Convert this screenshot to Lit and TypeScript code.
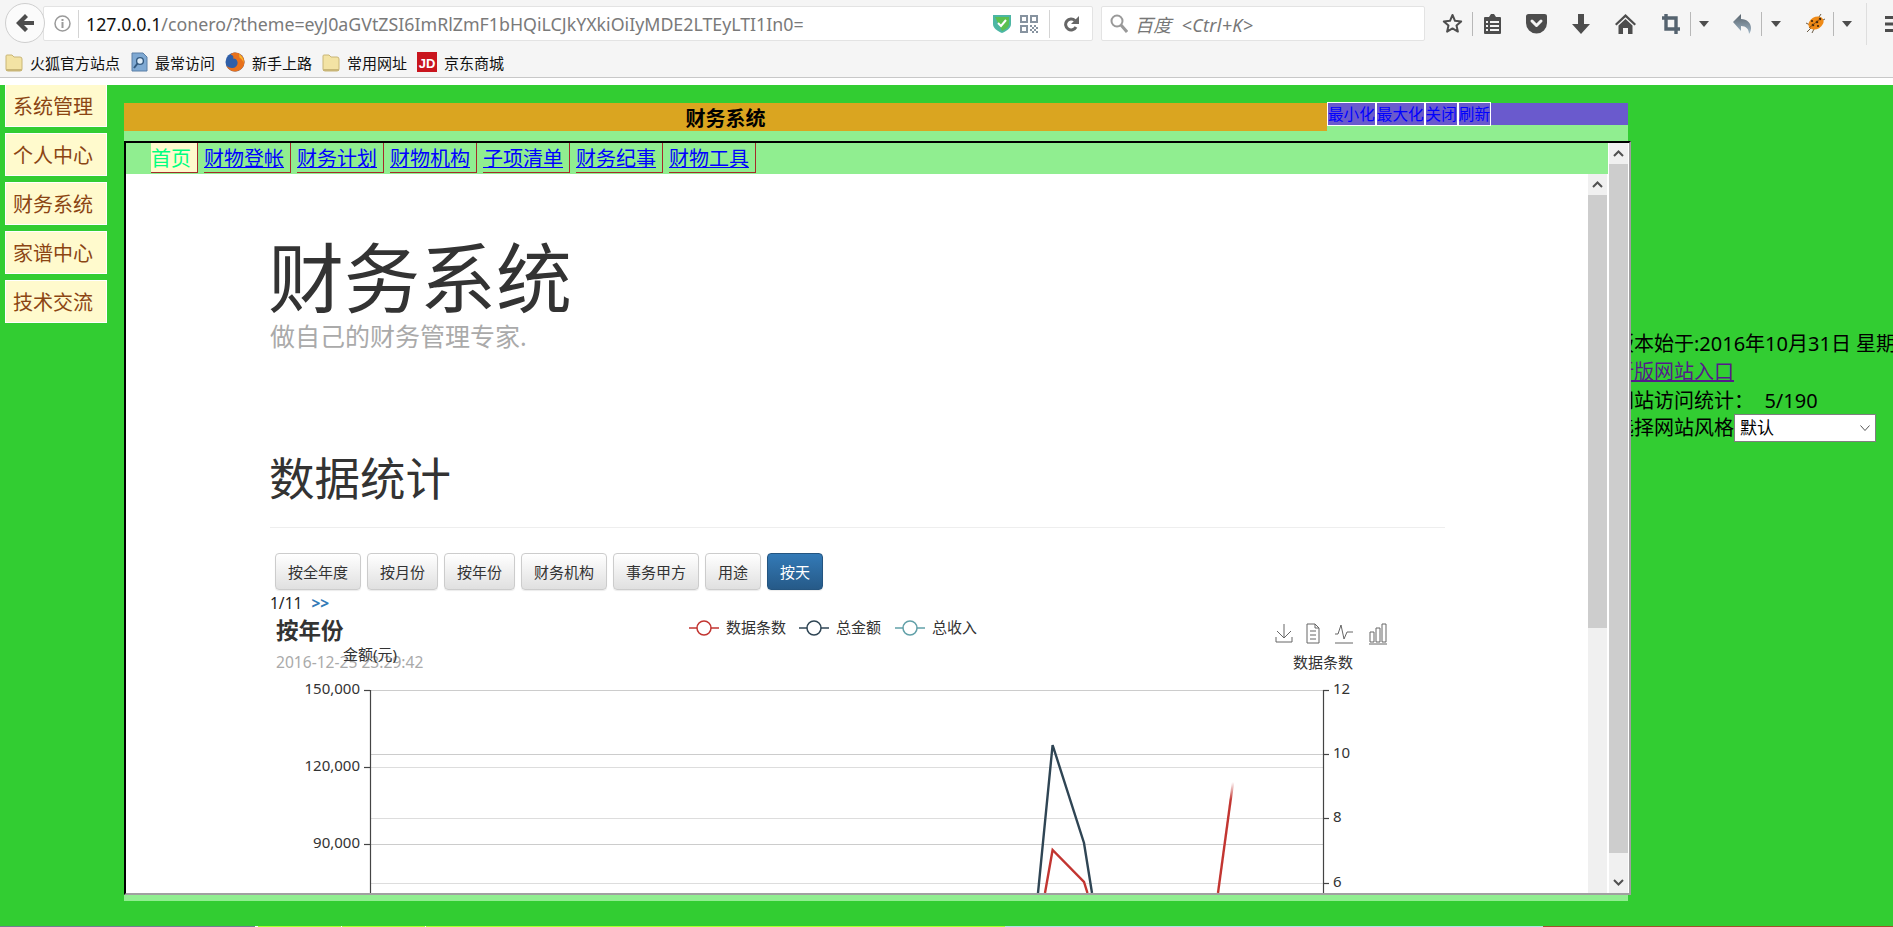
import { LitElement, html, css } from 'lit';
import { customElement } from 'lit/decorators.js';

const sideItems = ['系统管理', '个人中心', '财务系统', '家谱中心', '技术交流'];
const tabs = ['财物登帐', '财务计划', '财物机构', '子项清单', '财务纪事', '财物工具'];
const chartButtons = ['按全年度', '按月份', '按年份', '财务机构', '事务甲方', '用途'];

const folderIcon = html`<svg width="18" height="20" viewBox="0 0 18 20">
  <path d="M2 3h5l2 2h6a2 2 0 0 1 2 2v10a2 2 0 0 1-2 2H3a2 2 0 0 1-2-2V4a1 1 0 0 1 1-1z" fill="#f3e3a4" stroke="#c9b677" />
  <rect x="1" y="17" width="16" height="2" fill="#c9b677" />
</svg>`;

const bookmarks = [
  {
    label: '火狐官方站点',
    icon: folderIcon,
  },
  {
    label: '最常访问',
    icon: html`<svg width="18" height="20" viewBox="0 0 18 20">
      <path d="M2 1h11l4 4v14H2z" fill="#7fa9d3" stroke="#5b7fa6" />
      <circle cx="10" cy="9" r="3.4" fill="#dcebf7" stroke="#33597f" stroke-width="1.4" />
      <path d="M7.5 11.5L4 16" stroke="#33597f" stroke-width="2" />
    </svg>`,
  },
  {
    label: '新手上路',
    icon: html`<svg width="20" height="20" viewBox="0 0 20 20">
      <circle cx="10" cy="10" r="9.5" fill="#2f5fa8" />
      <path d="M10 .5a9.5 9.5 0 1 1-9 12.5c1.500 2 4.500 3.500 7 3 3-.5 5-3 4.500-6C12 7 9.500 6 8 6.500 9 4.500 8 3 5.500 2.500 7 1 8.500 .5 10 .5z" fill="#e8711c" />
      <path d="M14 2c3 2 5 5 4.500 9-.5-2.500-2-4.500-4-5.500z" fill="#f7b52c" />
    </svg>`,
  },
  {
    label: '常用网址',
    icon: folderIcon,
  },
  {
    label: '京东商城',
    icon: html`<svg width="20" height="20" viewBox="0 0 20 20">
      <rect width="20" height="20" fill="#c9151e" />
      <text x="10" y="15.500" text-anchor="middle" class="jd">JD</text>
    </svg>`,
  },
];

const dropdown = html`<svg width="10" height="6" viewBox="0 0 10 6"><path d="M0 0h10L5 6z" fill="#4d4d4d" /></svg>`;
const sep = html`<svg width="1" height="24" viewBox="0 0 1 24"><rect width="1" height="24" fill="#b8b8b8" /></svg>`;

// gap is the space before the item, counted from the end of the previous one
const tools = [
  {
    gap: 17,
    width: 21,
    icon: html`<svg width="21" height="21" viewBox="0 0 21 21"><path d="M10.500 2l2.500 5.800 6.200.6-4.700 4.100 1.400 6.100-5.400-3.200-5.400 3.200 1.400-6.100L1.800 8.400 8 7.800z" fill="none" stroke="#4d4d4d" stroke-width="2" stroke-linejoin="round" /></svg>`,
  },
  { gap: 9, width: 1, icon: sep },
  {
    gap: 10,
    width: 19,
    icon: html`<svg width="19" height="22" viewBox="0 0 19 22">
      <path d="M2 4h4l2-3h3l2 3h4a1 1 0 0 1 1 1v15a1 1 0 0 1-1 1H2a1 1 0 0 1-1-1V5a1 1 0 0 1 1-1z" fill="#4d4d4d" />
      <path d="M3 8h2v2H3zm4 0h9v2H7zm-4 4h2v2H3zm4 0h9v2H7zm-4 4h2v2H3zm4 0h9v2H7z" fill="#f5f5f5" />
    </svg>`,
  },
  {
    gap: 24,
    width: 21,
    icon: html`<svg width="21" height="20" viewBox="0 0 21 20">
      <path d="M2.500 0h16A2.500 2.500 0 0 1 21 2.500V9a10.500 10.500 0 0 1-21 0V2.500A2.500 2.500 0 0 1 2.500 0z" fill="#4d4d4d" />
      <path d="M6 7l4.500 4.500L15 7" fill="none" stroke="#f5f5f5" stroke-width="3" stroke-linecap="round" stroke-linejoin="round" />
    </svg>`,
  },
  {
    gap: 25,
    width: 18,
    icon: html`<svg width="18" height="20" viewBox="0 0 18 20"><path d="M6 0h6v10h6l-9 10-9-10h6z" fill="#4d4d4d" /></svg>`,
  },
  {
    gap: 25,
    width: 21,
    icon: html`<svg width="21" height="20" viewBox="0 0 21 20">
      <path d="M10.500 0L21 10l-1.500 1.500-9-8.300-9 8.300L0 10z" fill="#4d4d4d" />
      <path d="M10.500 5l7 6.500V20H13v-6H8v6H3.500v-8.500z" fill="#4d4d4d" />
    </svg>`,
  },
  {
    gap: 26,
    width: 18,
    icon: html`<svg width="18" height="20" viewBox="0 0 18 20">
      <path d="M4 0v15h14M0 4h14v16" fill="none" stroke="#55636f" stroke-width="3.400" />
    </svg>`,
  },
  { gap: 10, width: 1, icon: sep },
  { gap: 8, width: 10, icon: dropdown },
  {
    gap: 24,
    width: 18,
    icon: html`<svg width="18" height="20" viewBox="0 0 18 20">
      <defs>
        <linearGradient id="undo" x1="0" y1="0" x2="0" y2="1">
          <stop offset="0" stop-color="#59636c" />
          <stop offset="1" stop-color="#9fb6c7" />
        </linearGradient>
      </defs>
      <path d="M8 0v5c6 0 10 4 10 9 0 2-.5 4-2 6 0-5-3-8-8-8v5L0 8z" fill="url(#undo)" />
    </svg>`,
  },
  { gap: 10, width: 1, icon: sep },
  { gap: 9, width: 10, icon: dropdown },
  {
    gap: 24,
    width: 20,
    icon: html`<svg width="20" height="20" viewBox="0 0 20 20">
      <path d="M2 18l4-4M1 9l4 2M7 19l2-4M14 3l2-3M18 6l2-1" stroke="#6b5b45" stroke-width="1" />
      <ellipse cx="11" cy="9" rx="8" ry="6" transform="rotate(-30 11 9)" fill="#ef8a17" />
      <circle cx="8" cy="11" r="1.300" fill="#40260c" />
      <circle cx="12" cy="8" r="1.300" fill="#40260c" />
      <circle cx="15" cy="5" r="1.200" fill="#40260c" />
      <circle cx="7" cy="7" r="1.100" fill="#40260c" />
      <circle cx="13" cy="12" r="1.100" fill="#40260c" />
      <path d="M4 14L15 5" stroke="#7b4a14" stroke-width=".8" />
    </svg>`,
  },
  { gap: 8, width: 1, icon: sep },
  { gap: 8, width: 10, icon: dropdown },
  {
    gap: 14,
    width: 1,
    icon: html`<svg width="1" height="42" viewBox="0 0 1 42"><rect width="1" height="42" fill="#dedede" /></svg>`,
  },
  {
    gap: 16,
    width: 12,
    icon: html`<svg width="12" height="18" viewBox="0 0 12 18"><path d="M2 1h10v3H2zm0 6.500h10v3H2zm0 6.500h10v3H2z" fill="#4d4d4d" /></svg>`,
  },
];

const legend = [
  { x: 689, label: '数据条数', color: '#c23531' },
  { x: 799, label: '总金额', color: '#2f4554' },
  { x: 895, label: '总收入', color: '#61a0a8' },
];

const leftTicks = [
  { y: 690, label: '150,000' },
  { y: 767, label: '120,000' },
  { y: 844, label: '90,000' },
  { y: 921, label: '60,000' },
];

const rightTicks = [
  { y: 690, label: '12' },
  { y: 754, label: '10' },
  { y: 818, label: '8' },
  { y: 883, label: '6' },
];

@customElement('app-root')
export class AppRoot extends LitElement {
  static styles = css`
    :host {
      display: flex;
      flex-direction: column;
      height: 927px;
      overflow: hidden;
      font-family: 'Noto Sans', 'Noto Sans CJK SC', sans-serif;
      background: #fff;
    }

    /* browser chrome */
    .toolbar {
      flex: none;
      display: flex;
      align-items: flex-start;
      height: 41px;
      padding-top: 6px;
      background: #f5f5f5;
    }
    .back {
      flex: none;
      position: relative;
      z-index: 1;
      display: flex;
      align-items: center;
      justify-content: center;
      box-sizing: border-box;
      width: 40px;
      height: 40px;
      margin: -3px 0 0 5px;
      border: 1px solid #cfcfcf;
      border-radius: 50%;
      background: #fbfbfb;
    }
    .address,
    .search {
      flex: none;
      display: flex;
      align-items: center;
      box-sizing: border-box;
      height: 35px;
      border: 1px solid #e3e3e3;
      border-radius: 2px;
      background: #fff;
    }
    .address {
      width: 1050px;
      margin-left: -2px;
      padding: 0 13px 0 10px;
    }
    .url-sep {
      flex: none;
      width: 1px;
      height: 28px;
      margin-left: 7px;
      background: #d4d4d4;
    }
    .url {
      flex: 1;
      margin-left: 7px;
      font-size: 17.800px;
      color: #7a7a7a;
      white-space: nowrap;
    }
    .url b {
      font-weight: 400;
      color: #111;
    }
    .qr {
      margin-left: 9px;
    }
    .bar-sep {
      width: 1px;
      height: 28px;
      margin: 0 14px 0 11px;
      background: #d4d4d4;
    }
    .search {
      width: 324px;
      margin-left: 8px;
      padding-left: 8px;
      font-size: 18px;
      font-style: italic;
      color: #777;
    }
    .search span {
      margin-left: 7px;
      letter-spacing: 0.3px;
    }
    .tools {
      display: flex;
      align-items: center;
      height: 35px;
    }
    .tool {
      flex: none;
      display: flex;
      justify-content: center;
    }
    .bookmarks {
      flex: none;
      display: flex;
      align-items: center;
      gap: 10px;
      box-sizing: border-box;
      height: 31px;
      padding: 0 0 0 5px;
      border-bottom: 1px solid #c8c8c8;
      background: #f5f5f5;
      font-size: 15px;
      color: #111;
    }
    .bookmark {
      display: flex;
      align-items: center;
      gap: 7px;
    }
    .jd {
      font: 700 13px 'Liberation Sans', sans-serif;
      fill: #fff;
    }
    .gap-white {
      flex: none;
      height: 7px;
      background: #fff;
    }

    /* page */
    .page {
      flex: none;
      display: flex;
      height: 841px;
      overflow: hidden;
      background: #32cd32;
    }
    .side {
      flex: none;
      display: flex;
      flex-direction: column;
      gap: 6px;
      box-sizing: border-box;
      width: 124px;
      margin-top: -1px;
      padding-left: 5px;
    }
    .side a {
      box-sizing: border-box;
      width: 102px;
      height: 43px;
      padding-left: 7px;
      border: 1px solid #fff;
      background: #fffacd;
      color: #8b4513;
      font-size: 20px;
      line-height: 43px;
    }
    .window {
      flex: none;
      position: relative;
      z-index: 1;
      width: 1504px;
      margin-top: 18px;
      height: 798px;
      background: #90ee90;
    }
    .head {
      display: flex;
      align-items: flex-start;
      height: 38px;
    }
    .title {
      width: 1203px;
      height: 28px;
      background: #daa520;
      text-align: center;
      font-size: 20px;
      font-weight: 700;
      line-height: 31px;
      color: #000;
    }
    .win-buttons {
      flex: 1;
      display: flex;
      height: 22px;
      background: #6a5acd;
    }
    .win-buttons a {
      box-sizing: border-box;
      height: 24px;
      margin-top: -1px;
      border: 1px solid #fff;
      color: #00f;
      font-size: 15.600px;
      line-height: 22px;
    }
    .frame {
      display: flex;
      box-sizing: border-box;
      width: 1507px;
      height: 754px;
      border: 2px solid;
      border-color: #000 #a0a0a0 #a0a0a0 #000;
      background: #fff;
    }
    .main {
      flex: 1;
      min-width: 0;
      display: flex;
      flex-direction: column;
    }
    .nav {
      flex: none;
      display: flex;
      gap: 6px;
      height: 31px;
      padding-left: 25px;
      margin-right: 1px;
      background: #90ee90;
    }
    .nav a {
      height: 29px;
      padding-right: 6px;
      border-right: 1px solid #a52a2a;
      border-bottom: 1px solid #a52a2a;
      color: #00f;
      font-size: 20px;
      line-height: 31px;
      text-decoration: underline;
      text-decoration-thickness: 1px;
      text-underline-offset: 1px;
    }
    .nav a.current {
      background: #fffacd;
      color: #00ff7f;
      text-decoration: none;
    }
    .inner {
      flex: 1;
      min-height: 0;
      display: flex;
    }
    .content {
      flex: 1;
      min-width: 0;
      overflow: hidden;
      padding: 66px 0 0 144px;
    }
    .bar {
      flex: none;
      display: flex;
      flex-direction: column;
      width: 19px;
      background: #f0f0f0;
    }
    .bar.inner-bar {
      margin-right: 2px;
    }
    .bar .arrow {
      flex: none;
      display: flex;
      align-items: center;
      justify-content: center;
      height: 21px;
    }
    .bar .thumb {
      flex: none;
      background: #cdcdcd;
    }
    .inner-bar .thumb {
      height: 433px;
    }
    .outer-bar .thumb {
      flex: 1;
    }
    .outer-bar .rest {
      flex: none;
      height: 19px;
    }
    .outer-bar {
      margin-left: 0;
      border-right: 1px solid #fff;
    }
    h1,
    h2,
    p {
      margin: 0;
      font-weight: 400;
    }
    h1 {
      margin-left: -2px;
      font-size: 76px;
      line-height: 75px;
      color: #333;
    }
    .sub {
      margin-top: 8px;
      font-size: 25px;
      line-height: 27px;
      color: #aaa;
    }
    h2 {
      margin: 105px 0 0 -1px;
      font-size: 45.500px;
      line-height: 47px;
      color: #333;
    }
    .rule {
      width: 1175px;
      margin-top: 25px;
      border-top: 1px solid #eee;
    }
    .buttons {
      display: flex;
      gap: 6px;
      margin: 25px 0 0 5px;
    }
    .buttons button {
      box-sizing: border-box;
      height: 37px;
      padding: 0 12px;
      border: 1px solid #ccc;
      border-radius: 4px;
      background: linear-gradient(#fff, #e0e0e0);
      box-shadow: 0 1px 1px rgba(0, 0, 0, 0.08);
      color: #333;
      font-family: inherit;
      font-size: 15px;
    }
    .buttons button.on {
      border-color: #245580;
      background: linear-gradient(#337ab7, #265a88);
      color: #fff;
    }
    .pager {
      box-sizing: border-box;
      height: 22px;
      padding-top: 2px;
      font-size: 15.500px;
      line-height: 22px;
      color: #222;
    }
    .pager a {
      margin-left: 5px;
      color: #337ab7;
      font-weight: 700;
    }
    .chart {
      display: block;
    }
    .chart text {
      font-family: 'Noto Sans', 'Noto Sans CJK SC', sans-serif;
      font-size: 15px;
      fill: #333;
    }
    .chart text.chart-title {
      font-size: 22.500px;
      font-weight: 700;
    }
    .chart text.chart-sub {
      font-size: 15.600px;
      fill: #aaa;
    }

    /* right column sits partly under the window */
    .info {
      flex: 1;
      min-width: 0;
      overflow: hidden;
      margin-left: -14px;
      padding-top: 245px;
      color: #000;
      font-size: 20px;
      line-height: 28.600px;
      white-space: nowrap;
    }
    .info a {
      display: block;
      margin-top: -1px;
      color: #551a8b;
      text-decoration: underline;
    }
    .count {
      margin-top: 1px;
    }
    .style-row {
      display: flex;
      align-items: center;
      margin-top: -2px;
    }
    .select {
      display: flex;
      align-items: center;
      justify-content: space-between;
      box-sizing: border-box;
      width: 142px;
      height: 28px;
      padding: 0 5px;
      border: 1px solid #7f7f7f;
      background: #fff;
      font-size: 17px;
    }
    .strip {
      flex: none;
      display: flex;
      height: 1px;
    }
    .strip i {
      display: block;
    }
    .s1 {
      width: 255px;
      background: #708090;
    }
    .s2 {
      width: 3px;
      background: #fff;
    }
    .s3 {
      width: 83px;
      background: #adff2f;
    }
    .s4 {
      width: 1px;
      background: #fff;
    }
    .s5 {
      width: 579px;
      background: #adff2f;
    }
    .s6 {
      width: 538px;
      background: #b0e0e6;
    }
    .s7 {
      flex: 1;
      background: #a0522d;
    }
  `;

  private renderTopBar() {
    return html`
      <div class="toolbar">
        <div class="back">
          <svg width="18" height="18" viewBox="0 0 18 18">
            <path d="M9 0L0 9l9 9 3-3-4-4h10V7H8l4-4z" fill="#4d4d4d" />
          </svg>
        </div>
        <div class="address">
          <svg width="17" height="17" viewBox="0 0 17 17">
            <circle cx="8.500" cy="8.500" r="7.500" fill="none" stroke="#9a9a9a" stroke-width="1.500" />
            <rect x="7.500" y="7" width="2" height="6" fill="#9a9a9a" />
            <rect x="7.500" y="4" width="2" height="2" fill="#9a9a9a" />
          </svg>
          <div class="url-sep"></div>
          <div class="url"><b>127.0.0.1</b>/conero/?theme=eyJ0aGVtZSI6ImRlZmF1bHQiLCJkYXkiOiIyMDE2LTEyLTI1In0=</div>
          <svg width="18" height="19" viewBox="0 0 18 19">
            <path d="M0 1h18v9c0 4-4 7-9 9-5-2-9-5-9-9z" fill="#4cb6a4" />
            <path d="M2 3h14v7c0 3-3 5-7 7z" fill="#5bc04f" />
            <path d="M5 9l3 3 5-6" fill="none" stroke="#fff" stroke-width="2" />
          </svg>
          <svg class="qr" width="18" height="18" viewBox="0 0 18 18" fill="#8793a0">
            <path d="M0 0h8v8H0zm2 2v4h4V2zM10 0h8v8h-8zm2 2v4h4V2zM0 10h8v8H0zm2 2v4h4v-4z" fill-rule="evenodd" />
            <path d="M10 10h2v2h-2zm4 0h2v2h-2zm-2 2h2v2h-2zm4 0h2v2h-2zm-6 2h2v2h-2zm4 0h2v2h-2zm-2 2h2v2h-2zm4 0h2v2h-2z" />
          </svg>
          <div class="bar-sep"></div>
          <svg width="15" height="16" viewBox="0 0 15 16">
            <path d="M12 11a5.500 5.500 0 1 1-1-6.500" fill="none" stroke="#666" stroke-width="3" />
            <path d="M15 0v8H7z" fill="#666" />
          </svg>
        </div>
        <div class="search">
          <svg width="18" height="19" viewBox="0 0 18 19">
            <circle cx="7" cy="7" r="5.500" fill="none" stroke="#999" stroke-width="2" />
            <path d="M11 11l6 7" stroke="#999" stroke-width="3" />
          </svg>
          <span>百度&nbsp;&nbsp;&lt;Ctrl+K&gt;</span>
        </div>
        <div class="tools">
          ${tools.map(
            (t) => html`<div class="tool" style="margin-left:${t.gap}px;width:${t.width}px">${t.icon}</div>`,
          )}
        </div>
      </div>
      <div class="bookmarks">
        ${bookmarks.map((b) => html`<div class="bookmark">${b.icon}<span>${b.label}</span></div>`)}
      </div>
      <div class="gap-white"></div>
    `;
  }

  private renderChart() {
    const gridLines = [
      { y: 690, c: '#ccc' },
      { y: 754, c: '#ccc' },
      { y: 767, c: '#ddd' },
      { y: 818, c: '#ddd' },
      { y: 844, c: '#ccc' },
      { y: 883, c: '#ddd' },
    ];
    return html`
      <svg class="chart" width="1175" height="290" viewBox="270 612 1175 290">
        <defs>
          <linearGradient id="fade" gradientUnits="userSpaceOnUse" x1="0" y1="782" x2="0" y2="800">
            <stop offset="0" stop-color="#c23531" stop-opacity="0" />
            <stop offset="1" stop-color="#c23531" />
          </linearGradient>
        </defs>
        <text class="chart-title" x="276" y="639">按年份</text>
        <text class="chart-sub" x="276" y="668">2016-12-25 23:29:42</text>
        <text x="370" y="660" text-anchor="middle">金额(元)</text>
        <text x="1323" y="668" text-anchor="middle">数据条数</text>

        ${legend.map(
          (l) => html`<svg x="0" y="0" overflow="visible">
            <line x1=${l.x} x2=${l.x + 30} y1="628" y2="628" stroke=${l.color} stroke-width="1.500" />
            <circle cx=${l.x + 15} cy="628" r="7" fill="#fff" stroke=${l.color} stroke-width="1.500" />
            <text x=${l.x + 37} y="633">${l.label}</text>
          </svg>`,
        )}

        <g fill="none" stroke="#666" stroke-width="1">
          <path d="M1284 624v14M1277 631l7 7 7-7M1276 637v5h16v-5" />
          <path d="M1307 624h8l4 4v15h-12zM1315 624v4h4M1310 631h6M1310 635h6M1310 639h6" />
          <path d="M1335 634h3l3-9 3 14 3-7h6M1335 643h18" />
          <path d="M1370 632h4v10h-4zM1376 628h4v14h-4zM1382 624h4v18h-4zM1369 644h18" />
        </g>

        ${gridLines.map((g) => html`<svg overflow="visible"><line x1="370" x2="1323" y1=${g.y + 0.5} y2=${g.y + 0.5} stroke=${g.c} stroke-width="1.200" /></svg>`)}

        <polyline points="1038,893 1052.600,745 1084,843 1092,893" fill="none" stroke="#2f4554" stroke-width="2.400" />
        <polyline points="1045,893 1052.600,850 1084,882 1087.500,893" fill="none" stroke="#c23531" stroke-width="2.400" />
        <line x1="1218" y1="893" x2="1233.600" y2="778" stroke="url(#fade)" stroke-width="2.400" />

        <line x1="370.500" x2="370.500" y1="690" y2="930" stroke="#444" stroke-width="1.200" />
        <line x1="1323.500" x2="1323.500" y1="690" y2="930" stroke="#444" stroke-width="1.200" />
        ${leftTicks.map(
          (t) => html`<svg overflow="visible">
            <line x1="364" x2="370" y1=${t.y + 0.5} y2=${t.y + 0.5} stroke="#444" stroke-width="1.200" />
            <text x="360" y=${t.y + 4} text-anchor="end">${t.label}</text>
          </svg>`,
        )}
        ${rightTicks.map(
          (t) => html`<svg overflow="visible">
            <line x1="1323" x2="1329" y1=${t.y + 0.5} y2=${t.y + 0.5} stroke="#444" stroke-width="1.200" />
            <text x="1333" y=${t.y + 4}>${t.label}</text>
          </svg>`,
        )}
      </svg>
    `;
  }

  private arrow(up: boolean) {
    return html`<div class="arrow">
      <svg width="11" height="7" viewBox="0 0 11 7">
        <path d=${up ? 'M1 6l4.500-4.500L10 6' : 'M1 1l4.500 4.500L10 1'} fill="none" stroke="#505050" stroke-width="2" />
      </svg>
    </div>`;
  }

  render() {
    return html`
      ${this.renderTopBar()}
      <div class="page">
        <div class="side">${sideItems.map((s) => html`<a>${s}</a>`)}</div>
        <div class="window">
          <div class="head">
            <div class="title">财务系统</div>
            <div class="win-buttons">
              <a>最小化</a><a>最大化</a><a>关闭</a><a>刷新</a>
            </div>
          </div>
          <div class="frame">
            <div class="main">
              <div class="nav">
                <a class="current">首页</a>
                ${tabs.map((t) => html`<a>${t}</a>`)}
              </div>
              <div class="inner">
                <div class="content">
                  <h1>财务系统</h1>
                  <p class="sub">做自己的财务管理专家.</p>
                  <h2>数据统计</h2>
                  <div class="rule"></div>
                  <div class="buttons">
                    ${chartButtons.map((b) => html`<button>${b}</button>`)}
                    <button class="on">按天</button>
                  </div>
                  <div class="pager">1/11 <a>&gt;&gt;</a></div>
                  ${this.renderChart()}
                </div>
                <div class="bar inner-bar">
                  ${this.arrow(true)}
                  <div class="thumb"></div>
                </div>
              </div>
            </div>
            <div class="bar outer-bar">
              ${this.arrow(true)}
              <div class="thumb"></div>
              <div class="arrow rest"></div>
              ${this.arrow(false)}
            </div>
          </div>
        </div>
        <div class="info">
          <div>版本始于:2016年10月31日 星期一</div>
          <a>新版网站入口</a>
          <div class="count">网站访问统计：&nbsp;&nbsp;5/190</div>
          <div class="style-row">
            选择网站风格
            <div class="select">
              默认
              <svg width="10" height="6" viewBox="0 0 10 6"><path d="M.5.500l4.500 5 4.500-5" fill="none" stroke="#555" /></svg>
            </div>
          </div>
        </div>
      </div>
      <div class="strip">
        <i class="s1"></i><i class="s2"></i><i class="s3"></i><i class="s4"></i><i class="s3"></i><i class="s4"></i><i class="s5"></i><i class="s6"></i><i class="s7"></i>
      </div>
    `;
  }
}
